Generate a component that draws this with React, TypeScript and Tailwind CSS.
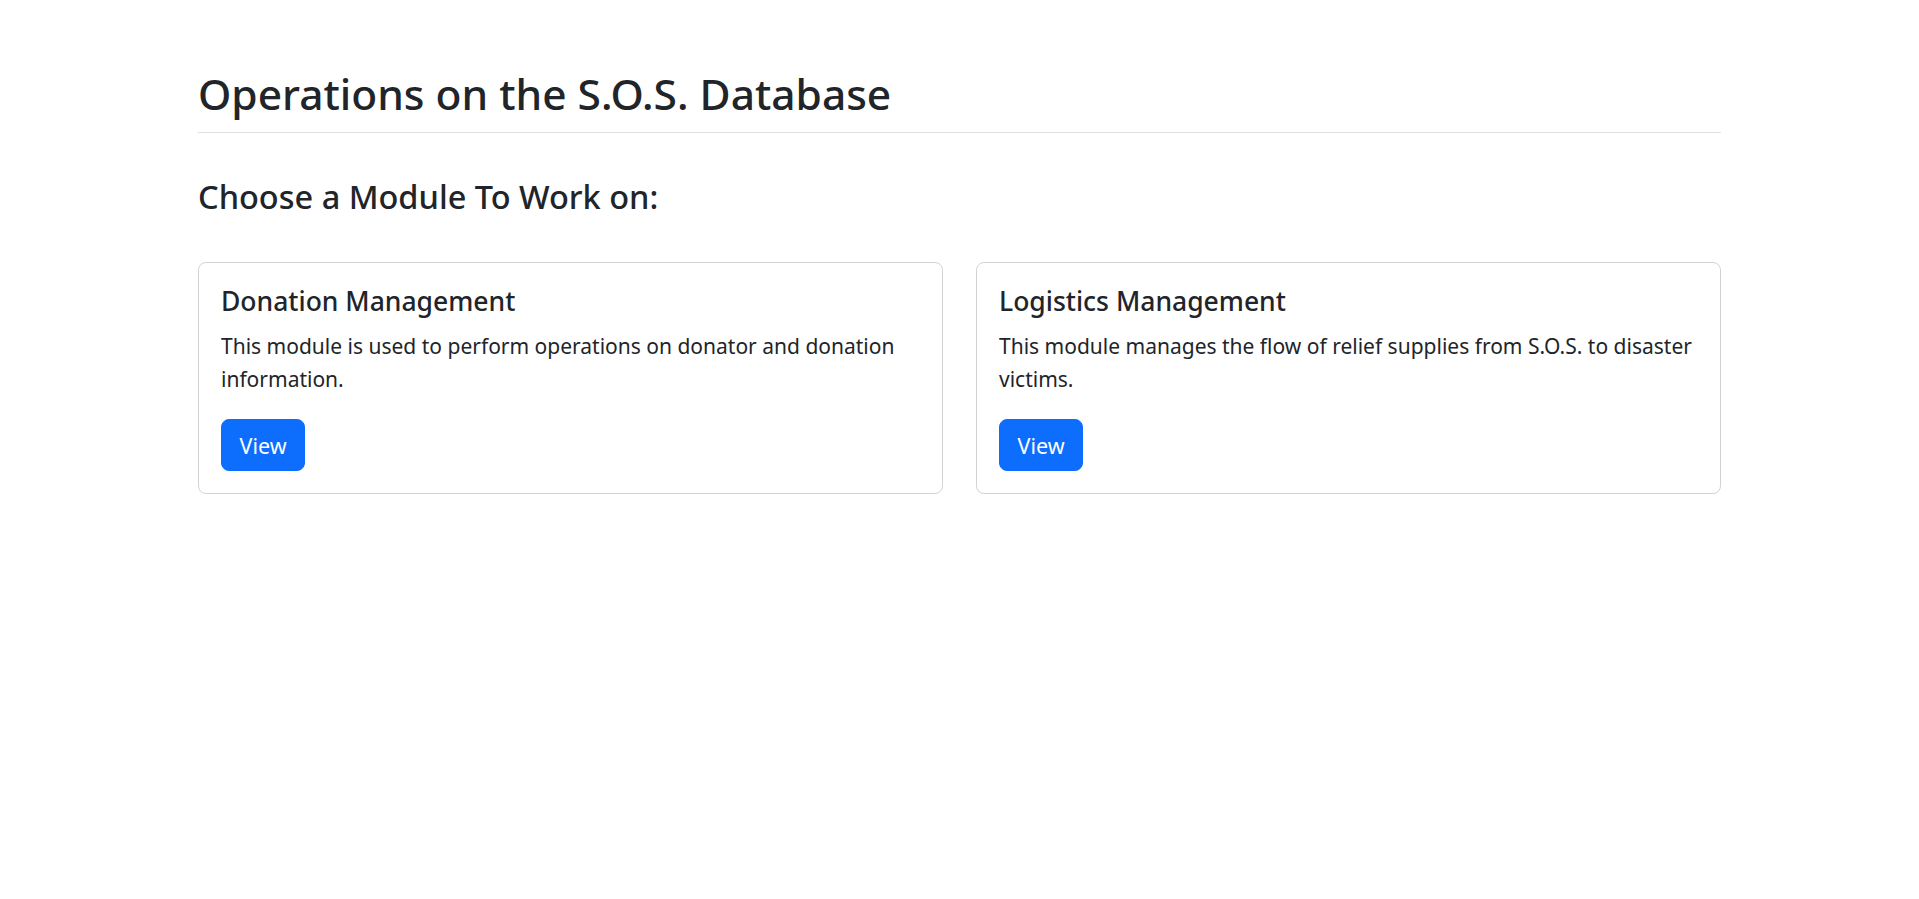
const modules = [
  {
    title: "Donation Management",
    text: "This module is used to perform operations on donator and donation information.",
  },
  {
    title: "Logistics Management",
    text: "This module manages the flow of relief supplies from S.O.S. to disaster victims.",
  },
];

export default function App() {
  return (
    <div className="min-h-screen bg-white text-[#212529] font-['Noto_Sans',sans-serif]">
      <div className="mx-auto w-[1523px] pt-[68px]">
        <h2 className="text-[42.5px] leading-[52.8px] font-medium pb-[11px] border-b border-[#dee2e6]">
          Operations on the S.O.S. Database
        </h2>
        <h4 className="mt-[44px] text-[32.5px] leading-[39.6px] font-medium">Choose a Module To Work on:</h4>

        <div className="mt-[46px] grid grid-cols-2 gap-[33px]">
          {modules.map((m) => (
            <div key={m.title} className="border border-black/[0.175] rounded-[8px] p-[22px]">
              <h5 className="text-[26.5px] leading-[33px] font-medium mb-[12px]">{m.title}</h5>
              <p className="text-[21px] leading-[33px] mb-[23px]">{m.text}</p>
              <button className="bg-[#0d6efd] border border-[#0d6efd] text-white text-[21.5px] leading-[33px] px-[17.5px] py-[8.5px] rounded-[8px]">
                View
              </button>
            </div>
          ))}
        </div>
      </div>
    </div>
  );
}
